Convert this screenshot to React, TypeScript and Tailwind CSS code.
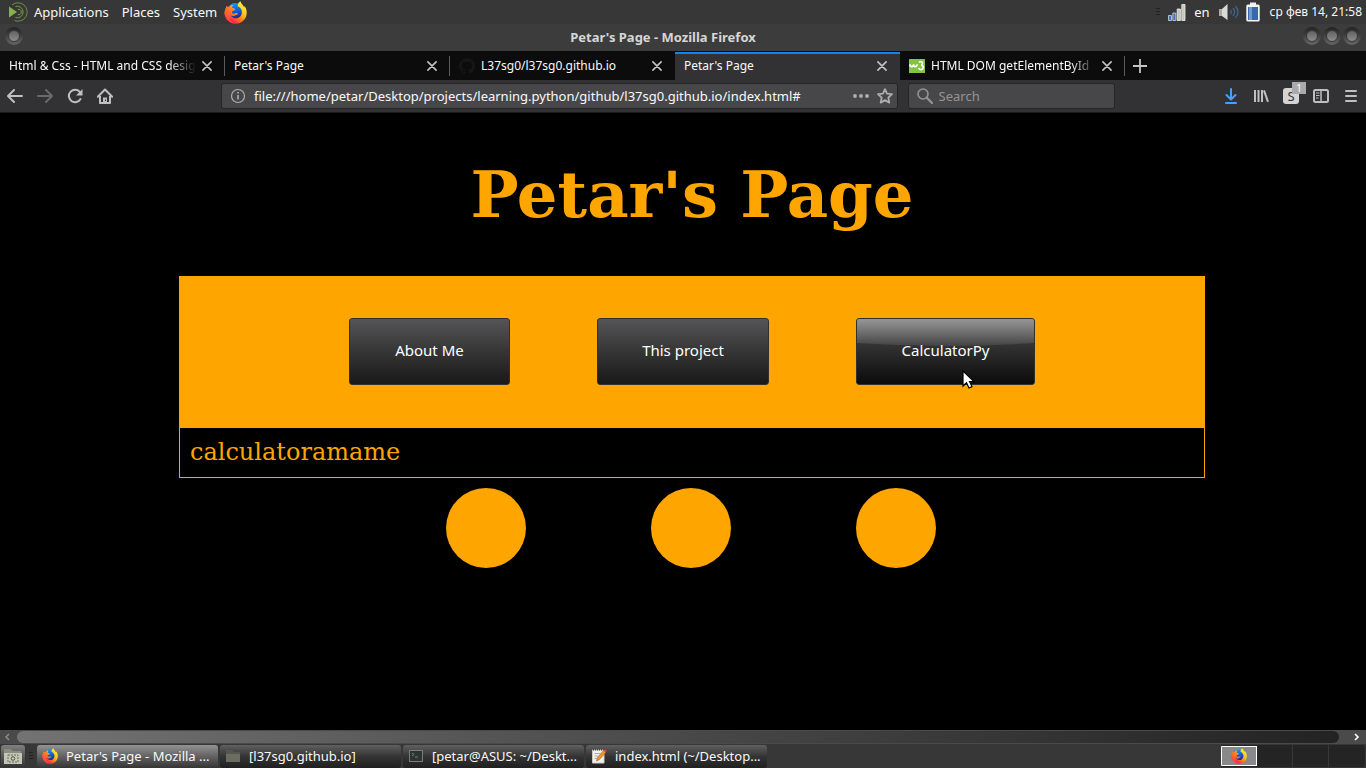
import type { ReactNode } from "react";

function FirefoxIcon({ className }: { className: string }) {
  return (
    <svg viewBox="0 0 24 24" className={className} aria-hidden="true">
      <defs>
        <linearGradient id="fx-body" x1="0.85" y1="0.1" x2="0.2" y2="0.95">
          <stop offset="0" stopColor="#fff03a" />
          <stop offset="0.35" stopColor="#ffc21c" />
          <stop offset="0.6" stopColor="#ff7a16" />
          <stop offset="0.85" stopColor="#ff2c4a" />
          <stop offset="1" stopColor="#e8158a" />
        </linearGradient>
        <linearGradient id="fx-globe" x1="0.3" y1="0" x2="0.6" y2="1">
          <stop offset="0" stopColor="#0a9cf5" />
          <stop offset="0.6" stopColor="#1553c8" />
          <stop offset="1" stopColor="#27197a" />
        </linearGradient>
        <linearGradient id="fx-face" x1="0.8" y1="0" x2="0.2" y2="1">
          <stop offset="0" stopColor="#ff9a1c" />
          <stop offset="1" stopColor="#ff3440" />
        </linearGradient>
      </defs>
      <circle cx="12" cy="10.800" r="8.600" fill="url(#fx-globe)" />
      <path
        d="M2.500 5.200C2.300 6.600 2.200 7 1.500 8.400C.3 11 .2 14 1.600 17c1.900 4.100 5.900 6.700 10.500 6.700c6.500 0 11.600-5.100 11.600-11.500c0-3-.8-5.500-2.600-7.300c.2.900.2 1.400.1 1.900C20.300 4.400 18 3.300 17 .3c-2.300 1.500-2.900 3.500-2.700 5.200c3.200 1.300 4.700 4.100 4.300 7.100c-.5 3.500-3.200 5.500-6.300 5.500c-2.300 0-4.300-1.300-5-3c1.600.9 3.600.7 4.900-.3c.8-.7 1.600-.8 2-.8c.4-.2.200-.9-.4-1.200c-1.400-.6-2.400.8-4 .4c-1.300-.3-1.800-1.500-1.400-2.600c1.600-.1 3-1.300 3.100-2c.1-.8-2-.7-2.900-1.300c-.3-1.100.1-2.300 1-3C7.500 4 6.500 5 5.900 5.900C4.800 5.800 4.300 6 3.900 6.200C3.200 6 2.700 5.600 2.500 5.200z"
        fill="url(#fx-body)"
      />
      <path
        d="M2.500 5.200C2.300 6.600 2.200 7 1.500 8.400C.3 11 .2 14 1.600 17c1.700 3.700 5.400 6.200 9.500 6.600c-4-1.500-5.900-4.500-5.200-8.200c.2-1.600.8-2.900 1.800-4.800c1.600-.1 3-1.300 3.100-2c.1-.8-2-.7-2.900-1.300c-.3-1.100.1-2.300 1-3C7.500 4 6.500 5 5.900 5.900C4.800 5.800 4.300 6 3.900 6.200C3.200 6 2.700 5.600 2.500 5.200z"
        fill="url(#fx-face)"
      />
    </svg>
  );
}

function MateIcon() {
  return (
    <svg viewBox="0 0 20 20" className="size-5" fill="none" stroke="#7ba54a" aria-hidden="true">
      <path d="M1 4.500L9 10L1 15.500z" fill="#86b14f" stroke="none" />
      <path d="M4 3A9.200 9.200 0 1 1 6.500 18.500" strokeWidth="0.800" />
      <path d="M7.500 4.500A5.800 5.800 0 1 1 7.500 15.500" strokeWidth="0.900" />
      <path d="M9.800 7.300A2.800 2.800 0 1 1 9.800 12.700" strokeWidth="0.900" />
    </svg>
  );
}

function WindowButton({ label }: { label: string }) {
  return (
    <button
      type="button"
      aria-label={label}
      className="flex size-[18px] items-center justify-center rounded-full bg-linear-to-b from-[#222] to-[#666]"
    >
      <span className="size-[12px] rounded-full border border-[#3a3a3a] bg-linear-to-b from-[#626262] to-[#8c8c8c]" />
    </button>
  );
}

function CloseIcon() {
  return (
    <svg viewBox="0 0 10 10" className="size-[10px]" stroke="#c4c4c5" strokeWidth="1.600" strokeLinecap="round" aria-hidden="true">
      <path d="M.9.9L9.100 9.100M9.100.9L.9 9.100" />
    </svg>
  );
}

function GithubIcon() {
  return (
    <svg viewBox="0 0 16 16" className="size-4 shrink-0" fill="#161618" aria-hidden="true">
      <path d="M8 0C3.580 0 0 3.580 0 8c0 3.540 2.290 6.530 5.470 7.590.4.070.55-.17.55-.38 0-.19-.01-.82-.01-1.490-2.010.37-2.530-.49-2.690-.94-.09-.23-.48-.94-.82-1.130-.28-.15-.68-.52-.01-.53.63-.01 1.080.58 1.230.82.72 1.210 1.870.87 2.330.66.07-.52.28-.87.51-1.070-1.780-.2-3.640-.89-3.640-3.950 0-.87.31-1.590.82-2.150-.08-.2-.36-1.020.08-2.120 0 0 .67-.21 2.200.82.64-.18 1.320-.27 2-.27s1.360.09 2 .27c1.530-1.040 2.200-.82 2.200-.82.44 1.100.16 1.920.08 2.120.51.56.82 1.270.82 2.150 0 3.070-1.870 3.750-3.650 3.950.29.25.54.73.54 1.480 0 1.070-.01 1.930-.01 2.200 0 .21.15.46.55.38A8.010 8.010 0 0 0 16 8c0-4.420-3.580-8-8-8z" />
    </svg>
  );
}

function W3Icon() {
  return (
    <svg viewBox="0 0 16 16" className="size-4 shrink-0" fill="none" stroke="#fff" aria-hidden="true">
      <rect width="16" height="14" y="1" rx="0.600" fill="#83c441" stroke="none" />
      <path d="M1 6.200c0 3.200 3.400 3.200 3.500.2c.2 3 3.500 3 3.700-.2" strokeWidth="1.600" />
      <path d="M10 4.500c1.300-1.600 4.300-.8 3.300 1.500c-.4.900-1.200 1.100-1.200 1.100c3 .4 2.600 4.500-.3 4.500c-1.200 0-1.900-.6-2.200-1.500" strokeWidth="1.600" />
    </svg>
  );
}

type Tab = { title: string; icon?: ReactNode; active?: boolean; fade?: boolean; divider?: boolean };

const tabs: Tab[] = [
  { title: "Html & Css - HTML and CSS desig", fade: true, divider: true },
  { title: "Petar's Page", divider: true },
  { title: "L37sg0/l37sg0.github.io", icon: <GithubIcon /> },
  { title: "Petar's Page", active: true },
  { title: "HTML DOM getElementById", icon: <W3Icon />, fade: true, divider: true },
];

function BrowserTab({ title, icon, active, fade, divider }: Tab) {
  return (
    <div
      className={`relative flex h-full w-[225px] shrink items-center gap-1.5 pr-[13px] pb-px pl-[9px] ${
        active ? "bg-[#323234]" : ""
      }`}
    >
      {active && <span className="absolute inset-x-0 top-0 h-0.5 bg-[#0a84ff]" />}
      {icon}
      <button
        type="button"
        className={`min-w-0 flex-1 overflow-hidden text-left text-[12px] whitespace-nowrap ${
          fade ? "[mask-image:linear-gradient(to_right,#000_85%,transparent)]" : ""
        }`}
      >
        {title}
      </button>
      <button type="button" aria-label={`Close ${title}`}>
        <CloseIcon />
      </button>
      {divider && <span className="absolute top-1 right-0 h-5 w-px bg-[#5b5b5c]" />}
    </div>
  );
}

function SystemPanel() {
  return (
    <header className="flex h-6 items-center justify-between bg-[#373737] pr-1 pl-2">
      <nav className="flex items-center">
        <MateIcon />
        <div className="ml-1.5 flex gap-[13px]">
          <button type="button">Applications</button>
          <button type="button">Places</button>
          <button type="button">System</button>
        </div>
        <button type="button" aria-label="Firefox" className="ml-[7px]">
          <FirefoxIcon className="size-[23px]" />
        </button>
      </nav>
      <div className="flex items-center">
        <svg viewBox="0 0 4 8" className="mr-2 h-2 w-1" stroke="#222" aria-hidden="true">
          <path d="M0 .5h4M0 3.500h4M0 6.500h4" />
        </svg>
        <svg viewBox="0 0 18 18" className="size-[18px]" strokeWidth="0.800" aria-hidden="true">
          <g fill="#4672bd" stroke="#cbd5e7">
            <path d="M.5 12.500h3v5h-3zM4.800 10h3v7.500h-3z" />
          </g>
          <path d="M9.200 6h3.200v11.500H9.200zM13.800 1.500h3.200v16h-3.200z" fill="#c5c5c0" stroke="#f1f1ee" />
        </svg>
        <button type="button" className="ml-2">en</button>
        <svg viewBox="0 0 22 20" className="ml-2 h-5 w-[22px]" fill="none" aria-hidden="true">
          <path d="M1 7h3v7H1z" fill="#aaa" />
          <path d="M4 7L9.500 2v16L4 14z" fill="#d9d9d6" />
          <path d="M9.500 2v16" stroke="#888" />
          <path d="M12.500 8q1.500 2 0 4M15 6q3.200 4 0 8M17.500 4q5 6 0 12" stroke="#3e6397" strokeWidth="1.300" />
        </svg>
        <svg viewBox="0 0 14 20" className="ml-1.5 h-5 w-3.5" aria-hidden="true">
          <rect x="4" y="0.500" width="6" height="3" fill="#eee" />
          <rect x="0.300" y="2.500" width="13.400" height="17" rx="1.500" fill="#f4f4f4" />
          <rect x="2" y="5" width="10" height="13" fill="#3868b0" />
          <path d="M3 5h3v13H3z" fill="#7199d1" />
        </svg>
        <time className="ml-2.5 text-[12px]">ср фев 14, 21:58</time>
      </div>
    </header>
  );
}

function TitleBar() {
  return (
    <div className="grid h-[27px] grid-cols-[1fr_auto_1fr] items-center bg-[#3c3c3d] pr-[5px] pb-1 pl-[5px]">
      <WindowButton label="Window menu" />
      <span className="pt-0.5 pr-10 font-bold text-[#d6d6d6]">Petar's Page - Mozilla Firefox</span>
      <div className="flex justify-end gap-0.5">
        <WindowButton label="Minimize" />
        <WindowButton label="Maximize" />
        <WindowButton label="Close" />
      </div>
    </div>
  );
}

function NavBar() {
  return (
    <div className="flex h-[33px] items-center border-b border-[#1b1b1c] bg-[#323234] pr-[7px] pl-[7px] text-[#bfbfc0]">
      <div className="flex w-[214px] shrink-0 gap-3.5">
        <button type="button" aria-label="Back">
          <svg viewBox="0 0 16 16" className="size-4" fill="none" stroke="currentColor" strokeWidth="2" strokeLinecap="round" strokeLinejoin="round">
            <path d="M15 8H1.500M7 2L1 8l6 6" />
          </svg>
        </button>
        <button type="button" aria-label="Forward" className="text-[#69696a]">
          <svg viewBox="0 0 16 16" className="size-4" fill="none" stroke="currentColor" strokeWidth="2" strokeLinecap="round" strokeLinejoin="round">
            <path d="M1 8h13.500M9 2l6 6l-6 6" />
          </svg>
        </button>
        <button type="button" aria-label="Reload">
          <svg viewBox="0 0 16 16" className="size-4" fill="none" stroke="currentColor" strokeWidth="2">
            <path d="M13.500 11A6.200 6.200 0 1 1 13 4.200" strokeLinecap="round" />
            <path d="M15.500 1v6.500H9z" fill="currentColor" stroke="none" />
          </svg>
        </button>
        <button type="button" aria-label="Home">
          <svg viewBox="0 0 16 16" className="size-4" fill="none" stroke="currentColor" strokeWidth="2" strokeLinejoin="round">
            <path d="M.8 8.800L8 1.500l7.200 7.300" strokeLinecap="round" />
            <path d="M3 8v7h10V8" />
            <path d="M6 15V9.500h4V15" fill="currentColor" stroke="none" />
            <path d="M8.500 11.500v1.500" stroke="#323234" strokeWidth="1" />
          </svg>
        </button>
      </div>
      <div className="flex h-[26px] min-w-0 flex-[657] items-center rounded-[3px] border border-[#252526] bg-[#474749] px-2 text-[#aeaeaf]">
        <svg viewBox="0 0 16 16" className="size-4 shrink-0" fill="none" stroke="currentColor" aria-hidden="true">
          <circle cx="8" cy="8" r="6.500" strokeWidth="1.200" />
          <path d="M8 7v4.500M8 4v1.500" strokeWidth="1.600" />
        </svg>
        <input
          aria-label="Address"
          defaultValue="file:///home/petar/Desktop/projects/learning.python/github/l37sg0.github.io/index.html#"
          className="ml-2 min-w-0 flex-1 bg-transparent text-[#f9f9fa] outline-none"
        />
        <button type="button" aria-label="Page actions">
          <svg viewBox="0 0 16 16" className="size-4" fill="currentColor">
            <circle cx="2" cy="8" r="1.900" />
            <circle cx="8" cy="8" r="1.900" />
            <circle cx="14" cy="8" r="1.900" />
          </svg>
        </button>
        <button type="button" aria-label="Bookmark this page" className="-mr-1 ml-2">
          <svg viewBox="0 0 16 16" className="size-4" fill="none" stroke="currentColor" strokeWidth="1.800" strokeLinejoin="round">
            <path d="M8 1.200l2 4.500l5 .5l-3.700 3.400l1 5L8 12.100l-4.300 2.500l1-5L1 6.200l5-.5z" />
          </svg>
        </button>
      </div>
      <div className="ml-2.5 flex h-[26px] min-w-0 flex-[197] items-center rounded-[3px] border border-[#252526] bg-[#474749] pl-2 text-[#949495]">
        <svg viewBox="0 0 16 16" className="size-4 shrink-0" fill="none" stroke="currentColor" aria-hidden="true">
          <circle cx="6" cy="6" r="5" strokeWidth="1.600" />
          <path d="M9.800 9.800L15 15" strokeWidth="2.200" strokeLinecap="round" />
        </svg>
        <input aria-label="Search" placeholder="Search" className="ml-1.5 min-w-0 flex-1 bg-transparent outline-none placeholder:text-[#949495]" />
      </div>
      <div className="flex w-[244px] shrink-0 items-center justify-end gap-3.5">
        <button type="button" aria-label="Downloads" className="text-[#45a1ff]">
          <svg viewBox="0 0 16 16" className="size-4" fill="none" stroke="currentColor" strokeWidth="2" strokeLinecap="round" strokeLinejoin="round">
            <path d="M8 1v10M3.500 7L8 11.500L12.500 7M3 15h10" />
          </svg>
        </button>
        <button type="button" aria-label="Library">
          <svg viewBox="0 0 16 16" className="size-4" fill="none" stroke="currentColor" strokeWidth="2">
            <path d="M2 2v12M5.500 2v12M9 2v12M11 2.300l4 11.500" />
          </svg>
        </button>
        <button type="button" aria-label="Extension" className="relative size-4 rounded-[3px] bg-[#d4d4d4] leading-4 text-[#333]">
          S
          <span className="absolute -top-1.5 -right-[7px] h-3 w-3.5 bg-[#aaa] text-[10px] leading-3 text-white">1</span>
        </button>
        <button type="button" aria-label="Sidebars">
          <svg viewBox="0 0 16 16" className="size-4" fill="none" stroke="currentColor">
            <rect x="1" y="2" width="14" height="12" rx="1.500" strokeWidth="2" />
            <path d="M8 2v12" strokeWidth="1.500" />
            <path d="M3 5h3.500M3 7.500h3.500M3 10h2.500" />
          </svg>
        </button>
        <button type="button" aria-label="Open menu">
          <svg viewBox="0 0 16 16" className="size-4" fill="none" stroke="currentColor" strokeWidth="2" strokeLinecap="round">
            <path d="M3 3h10M3 8h10M3 13h10" />
          </svg>
        </button>
      </div>
    </div>
  );
}

const menuButton =
  "h-[67px] rounded-[3px] border border-[#303030] pb-1 text-center text-white";

function Page() {
  return (
    <main className="flex-1 bg-black pl-[18px] font-['DejaVu_Serif',serif] text-[#ffa500]">
      <h1 className="pt-11 text-center text-[64px] leading-[75px] font-bold">Petar's Page</h1>
      <section className="mx-auto mt-11 max-w-[1026px] border border-[#ffa500]">
        <div className="flex h-[151px] items-start justify-center gap-[87px] bg-[#ffa500] pt-[41px] font-['Noto_Sans',sans-serif] text-[15px]">
          <button type="button" className={`${menuButton} w-[161px] bg-linear-to-b from-[#555557] to-[#191919]`}>
            About Me
          </button>
          <button type="button" className={`${menuButton} w-[172px] bg-linear-to-b from-[#555557] to-[#191919]`}>
            This project
          </button>
          <button
            type="button"
            className={`${menuButton} relative w-[179px] bg-linear-to-b from-[#505052] to-[#0c0c0c]`}
          >
            <svg viewBox="0 0 177 65" preserveAspectRatio="none" className="absolute inset-0 size-full rounded-[2px]" aria-hidden="true">
              <defs>
                <linearGradient id="gloss" x1="0" y1="0" x2="0" y2="1">
                  <stop offset="0" stopColor="#fff" stopOpacity="0.400" />
                  <stop offset="1" stopColor="#fff" stopOpacity="0.080" />
                </linearGradient>
              </defs>
              <path d="M0 0h177v24q-88 6-177 0z" fill="url(#gloss)" />
            </svg>
            <span className="relative">CalculatorPy</span>
            <svg viewBox="0 0 13 20" className="absolute top-[51px] left-[105px] h-5 w-[13px]" aria-hidden="true">
              <path d="M1 1v15l3.500-3.300L7 18l3-1.400L7.500 11.500H12z" fill="#fff" stroke="#000" strokeWidth="1.200" />
            </svg>
          </button>
        </div>
        <p className="px-2.5 py-[9px] text-[24px] leading-[31px]">calculatoramame</p>
      </section>
      <div className="mt-2.5 flex justify-center gap-[125px] pr-0.5">
        <span className="size-20 rounded-full bg-[#ffa500]" />
        <span className="size-20 rounded-full bg-[#ffa500]" />
        <span className="size-20 rounded-full bg-[#ffa500]" />
      </div>
    </main>
  );
}

function ScrollBar() {
  return (
    <div className="flex h-3.5 items-center bg-[#4a4a4a]">
      <button type="button" aria-label="Scroll left" className="flex w-[17px] justify-center pr-1">
        <svg viewBox="0 0 6 8" className="h-2 w-1.5" fill="none" stroke="#8c8c8c" strokeWidth="1.500">
          <path d="M5 1L2 4l3 3" />
        </svg>
      </button>
      <div className="h-3 flex-1 rounded-full bg-linear-to-r from-[#737373] to-[#232323]" />
      <button type="button" aria-label="Scroll right" className="flex w-[27px] justify-center pl-2">
        <svg viewBox="0 0 6 8" className="h-2 w-1.5" fill="none" stroke="#fff" strokeWidth="1.600">
          <path d="M1 1l3 3l-3 3" />
        </svg>
      </button>
    </div>
  );
}

function FolderIcon() {
  return (
    <svg viewBox="0 0 16 16" className="size-4 shrink-0" aria-hidden="true">
      <path d="M1 2h6l1.500 2H15v10H1z" fill="#55574e" />
      <path d="M1 6h14v8H1z" fill="#6b6d63" />
    </svg>
  );
}

function TerminalIcon() {
  return (
    <svg viewBox="0 0 16 16" className="size-4 shrink-0" fill="none" aria-hidden="true">
      <rect x="1.500" y="2.500" width="13" height="11" fill="#2c3434" stroke="#7b7d79" />
      <path d="M4 5l2 1.500L4 8M7 9h3" stroke="#77827f" />
    </svg>
  );
}

function EditorIcon() {
  return (
    <svg viewBox="0 0 16 16" className="size-4 shrink-0" fill="none" aria-hidden="true">
      <path d="M1.500 2h11.500v13H1.500z" fill="#f1f1ee" stroke="#c9c9c5" />
      <path d="M2 1.500h11" stroke="#444" strokeDasharray="1 1" strokeWidth="2" />
      <path d="M3.500 5.500h6M3.500 8h4M3.500 10.500h3" stroke="#aaa" />
      <path d="M5.500 13l1-3.500L13 2l2 2l-6.500 7.500z" fill="#f2972a" stroke="#a45b12" strokeWidth="0.600" />
      <path d="M12.500 2.500L14 1l2 2l-1.300 1.500z" fill="#e8343c" />
    </svg>
  );
}

const tasks = [
  { title: "Petar's Page - Mozilla ...", icon: <FirefoxIcon className="size-4 shrink-0" />, active: true },
  { title: "[l37sg0.github.io]", icon: <FolderIcon />, active: false },
  { title: "[petar@ASUS: ~/Deskt...", icon: <TerminalIcon />, active: false },
  { title: "index.html (~/Desktop...", icon: <EditorIcon />, active: false },
];

function TaskBar() {
  return (
    <footer className="flex h-6 items-center bg-[#373737] pr-px pl-px">
      <button
        type="button"
        aria-label="Show desktop"
        className="flex h-[22px] w-6 items-center justify-center rounded-[3px] bg-linear-to-b from-[#808080] to-[#333]"
      >
        <svg viewBox="0 0 20 18" className="h-[18px] w-5" fill="none" aria-hidden="true">
          <path d="M1 2h7l1.500 2H18v3H1z" fill="#8b8e7b" />
          <path d="M1 6h18v11H1z" fill="#c3c6b2" />
          <path d="M5 8h10v7H5z" stroke="#696c5e" strokeDasharray="2 1" />
          <circle cx="10" cy="11.500" r="1.800" stroke="#55584b" />
        </svg>
      </button>
      <svg viewBox="0 0 4 8" className="mx-1 h-2 w-1" stroke="#222" aria-hidden="true">
        <path d="M0 .5h4M0 3.500h4M0 6.500h4" />
      </svg>
      <div className="flex min-w-0 gap-0.5">
        {tasks.map((task) => (
          <button
            key={task.title}
            type="button"
            className={`flex h-[23px] w-[181px] items-center rounded-[3px] bg-linear-to-b px-[5px] text-left whitespace-nowrap ${
              task.active ? "from-[#939393] to-[#353535]" : "from-[#606060] via-[#343434] to-[#202020]"
            }`}
          >
            {task.icon}
            <span className="ml-2">{task.title}</span>
          </button>
        ))}
      </div>
      <div className="ml-auto flex h-[22px] overflow-hidden rounded-[3px] bg-[#242424]">
        <button
          type="button"
          aria-label="Workspace 1"
          className="flex h-5 w-9 items-center justify-center self-center border border-white bg-[#89898b]"
        >
          <FirefoxIcon className="size-4" />
        </button>
        <button type="button" aria-label="Workspace 2" className="w-9 border-r border-[#383838]" />
        <button type="button" aria-label="Workspace 3" className="w-9 border-r border-[#383838]" />
        <button type="button" aria-label="Workspace 4" className="w-9" />
      </div>
    </footer>
  );
}

export default function App() {
  return (
    <div className="flex min-h-screen flex-col bg-black font-['Noto_Sans',sans-serif] text-[13px] leading-4 text-[#f9f9fa]">
      <SystemPanel />
      <TitleBar />
      <div className="flex h-[29px] items-center bg-[#0c0c0d] pt-px">
        {tabs.map((tab, index) => (
          <BrowserTab key={index} {...tab} />
        ))}
        <button type="button" aria-label="New tab" className="ml-2">
          <svg viewBox="0 0 14 14" className="size-3.5" stroke="#c4c4c5" strokeWidth="1.800">
            <path d="M7 0v14M0 7h14" />
          </svg>
        </button>
      </div>
      <NavBar />
      <Page />
      <ScrollBar />
      <TaskBar />
    </div>
  );
}
